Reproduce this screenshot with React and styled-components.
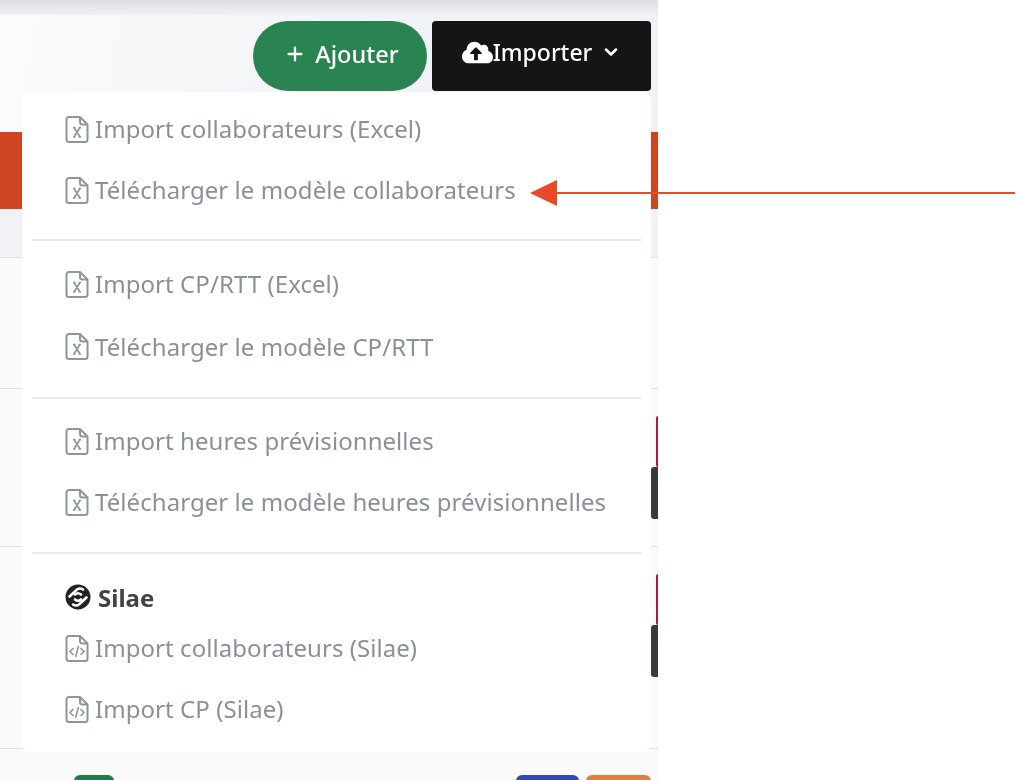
import React from 'react'
import styled, { createGlobalStyle } from 'styled-components'
import { FaCloudUploadAlt } from 'react-icons/fa'
import { ChevronDown, Plus } from 'lucide-react'

const GlobalStyle = createGlobalStyle`
  html, body {
    margin: 0;
    padding: 0;
    background: #fff;
    font-family: "Noto Sans", "Liberation Sans", sans-serif;
  }
`

const Shot = styled.div`
  position: relative;
  width: 1016px;
  height: 780px;
  overflow: hidden;
  background: #fff;
`

const Page = styled.div`
  position: relative;
  width: 658px;
  height: 780px;
  overflow: hidden;
  background: #f5f5f9;
  filter: blur(0.6px);
`

const TopBar = styled.div`
  height: 15px;
  background: linear-gradient(#dddee1, #f0f1f4);
`

const Toolbar = styled.div`
  display: flex;
  justify-content: flex-end;
  align-items: flex-start;
  gap: 5px;
  height: 111px;
  padding: 6px 7px 0 0;
  background: linear-gradient(100deg, #fbfbfc, #f1f2f6 60%);
`

const AddButton = styled.button`
  display: flex;
  align-items: center;
  justify-content: center;
  gap: 9px;
  width: 174px;
  height: 70px;
  padding: 0 0 5px 3px;
  border: 0;
  border-radius: 35px;
  background: #2a8452;
  color: #fff;
  font: 500 23.5px "Noto Sans", sans-serif;
`

const ImportButton = styled.button`
  display: flex;
  align-items: center;
  justify-content: center;
  width: 219px;
  height: 70px;
  padding-bottom: 9px;
  border: 0;
  border-radius: 4px;
  background: #151515;
  color: #fff;
  font: 500 23px "Noto Sans", sans-serif;
  svg:last-child {
    margin-left: 9px;
  }
`

const Banner = styled.div`
  height: 77px;
  background: #d04521;
`

const SubHeader = styled.div`
  height: 48px;
  background: #f1f2f6;
  border-bottom: 1px solid #dfe1e5;
`

const Row = styled.div`
  display: flex;
  align-items: flex-start;
  box-sizing: border-box;
  height: ${({ $height }) => $height}px;
  padding-top: ${({ $top }) => $top}px;
  background: #fafafb;
  border-bottom: 1px solid #dfe1e5;
`

const Actions = styled.div`
  display: flex;
  flex-direction: column;
  width: 7px;
  margin-left: auto;
`

const Clipped = styled.span`
  display: block;
  width: ${({ $inset }) => ($inset ? 2 : 7)}px;
  height: ${({ $height }) => $height}px;
  margin-left: ${({ $inset }) => ($inset ? 5 : 0)}px;
  border-radius: 3px 0 0 3px;
  background: ${({ $color }) => $color};
`

const FooterChips = styled.div`
  display: flex;
  width: 100%;
  padding-left: 74px;
`

const Chip = styled.span`
  display: block;
  width: ${({ $width }) => $width}px;
  height: 20px;
  margin-left: ${({ $gap }) => $gap}px;
  border-radius: 6px 6px 0 0;
  background: ${({ $color }) => $color};
`

const Menu = styled.div`
  position: absolute;
  left: 22px;
  top: 92px;
  box-sizing: border-box;
  width: 629px;
  height: 660px;
  padding: 6px 10px 0;
  border-radius: 8px;
  background: #fff;
`

const Divider = styled.hr`
  height: 2px;
  margin: ${({ $top }) => $top}px 0 ${({ $bottom }) => $bottom}px;
  border: 0;
  background: #e9ebef;
`

const Item = styled.div`
  display: flex;
  align-items: center;
  gap: 6px;
  height: ${({ $tall }) => ($tall ? 64 : 61)}px;
  padding-left: 33px;
  color: #8a9098;
  font-size: 24px;
  letter-spacing: 0.06px;
  white-space: nowrap;
  svg {
    flex: none;
    margin-top: 1px;
  }
`

const Provider = styled.div`
  display: flex;
  align-items: center;
  gap: 7px;
  height: 30px;
  margin-bottom: 5px;
  padding-left: 33px;
  color: #3f4246;
  font-size: 24px;
  font-weight: 700;
`

const Arrow = styled.svg`
  position: absolute;
  left: 525px;
  top: 175px;
`

const excelGroups = [
  {
    labels: ['Import collaborateurs (Excel)', 'Télécharger le modèle collaborateurs'],
    top: 19,
    bottom: 12,
  },
  {
    labels: ['Import CP/RTT (Excel)', 'Télécharger le modèle CP/RTT'],
    top: 19,
    bottom: 11,
    tall: true,
  },
  {
    labels: ['Import heures prévisionnelles', 'Télécharger le modèle heures prévisionnelles'],
    top: 20,
    bottom: 28,
  },
]

const silaeItems = ['Import collaborateurs (Silae)', 'Import CP (Silae)']

// same sheet outline for both file icons, only the mark inside changes
const FileIcon = ({ children }) => (
  <svg width="24" height="29" viewBox="0 0 24 29" fill="none" stroke="#8f959c" strokeWidth="2">
    <path d="M15 2H4a2.5 2.5 0 0 0-2.5 2.5v20A2.5 2.5 0 0 0 4 27h16a2.5 2.5 0 0 0 2.5-2.5V9.5z" />
    <path d="M15 2v5a2.5 2.5 0 0 0 2.5 2.5h5" />
    {children}
  </svg>
)

const ExcelIcon = () => (
  <FileIcon>
    <path d="M8 12.5h2.5M13.5 12.5H16M8 22h2.5M13.5 22H16M9 12.5l6 9.5M15 12.5l-6 9.5" strokeWidth="1.7" />
  </FileIcon>
)

const CodeIcon = () => (
  <FileIcon>
    <path d="M8.5 14l-3.5 3.5 3.5 3.5M15.5 14l3.5 3.5-3.5 3.5M13.5 12l-3 11" strokeWidth="1.6" />
  </FileIcon>
)

const SilaeLogo = () => (
  <svg width="26" height="26" viewBox="0 0 26 26">
    <circle cx="13" cy="13" r="12.5" fill="#222" />
    <g fill="none" stroke="#fff" strokeWidth="2.6" strokeLinecap="round">
      <path d="M4.5 12.5 L12 5.5 Q15 3.5 18 5.5" />
      <path d="M21.5 13.5 L14 20.5 Q11 22.5 8 20.5" />
      <path d="M10 10.5 Q13 8 16 10.5 M16 15.5 Q13 18 10 15.5" />
    </g>
  </svg>
)

const App = () => (
  <>
    <GlobalStyle />
    <Shot>
      <Page>
        <TopBar />
        <Toolbar>
          <AddButton>
            <Plus size={22} strokeWidth={2.5} />
            Ajouter
          </AddButton>
          <ImportButton>
            <FaCloudUploadAlt size={31} />
            Importer
            <ChevronDown size={20} strokeWidth={3} />
          </ImportButton>
        </Toolbar>
        <Banner />
        <SubHeader />
        <Row $height={131} $top={0} />
        <Row $height={158} $top={27}>
          <Actions>
            <Clipped $inset $color="#b3173c" $height={51} />
            <Clipped $color="#38393b" $height={52} />
          </Actions>
        </Row>
        <Row $height={202} $top={27}>
          <Actions>
            <Clipped $inset $color="#b3173c" $height={51} />
            <Clipped $color="#38393b" $height={52} />
          </Actions>
        </Row>
        <Row $height={32} $top={26}>
          <FooterChips>
            <Chip $width={40} $gap={0} $color="#1f7a4d" />
            <Chip $width={63} $gap={402} $color="#3547b5" />
            <Chip $width={65} $gap={7} $color="#e37f3a" />
          </FooterChips>
        </Row>
        <Menu>
          {excelGroups.map(({ labels, top, bottom, tall }) => (
            <React.Fragment key={labels[0]}>
              {labels.map(label => (
                <Item key={label} $tall={tall && label.startsWith('Télécharger')}>
                  <ExcelIcon />
                  {label}
                </Item>
              ))}
              <Divider $top={top} $bottom={bottom} />
            </React.Fragment>
          ))}
          <Provider>
            <SilaeLogo />
            Silae
          </Provider>
          {silaeItems.map(label => (
            <Item key={label}>
              <CodeIcon />
              {label}
            </Item>
          ))}
        </Menu>
      </Page>
      <Arrow width="491" height="36" viewBox="0 0 491 36">
        <path d="M5 18 L32 5 L32 31 Z" fill="#e8492a" />
        <path d="M30 18 H490" stroke="#e8492a" strokeWidth="2" />
      </Arrow>
    </Shot>
  </>
)

export default App
